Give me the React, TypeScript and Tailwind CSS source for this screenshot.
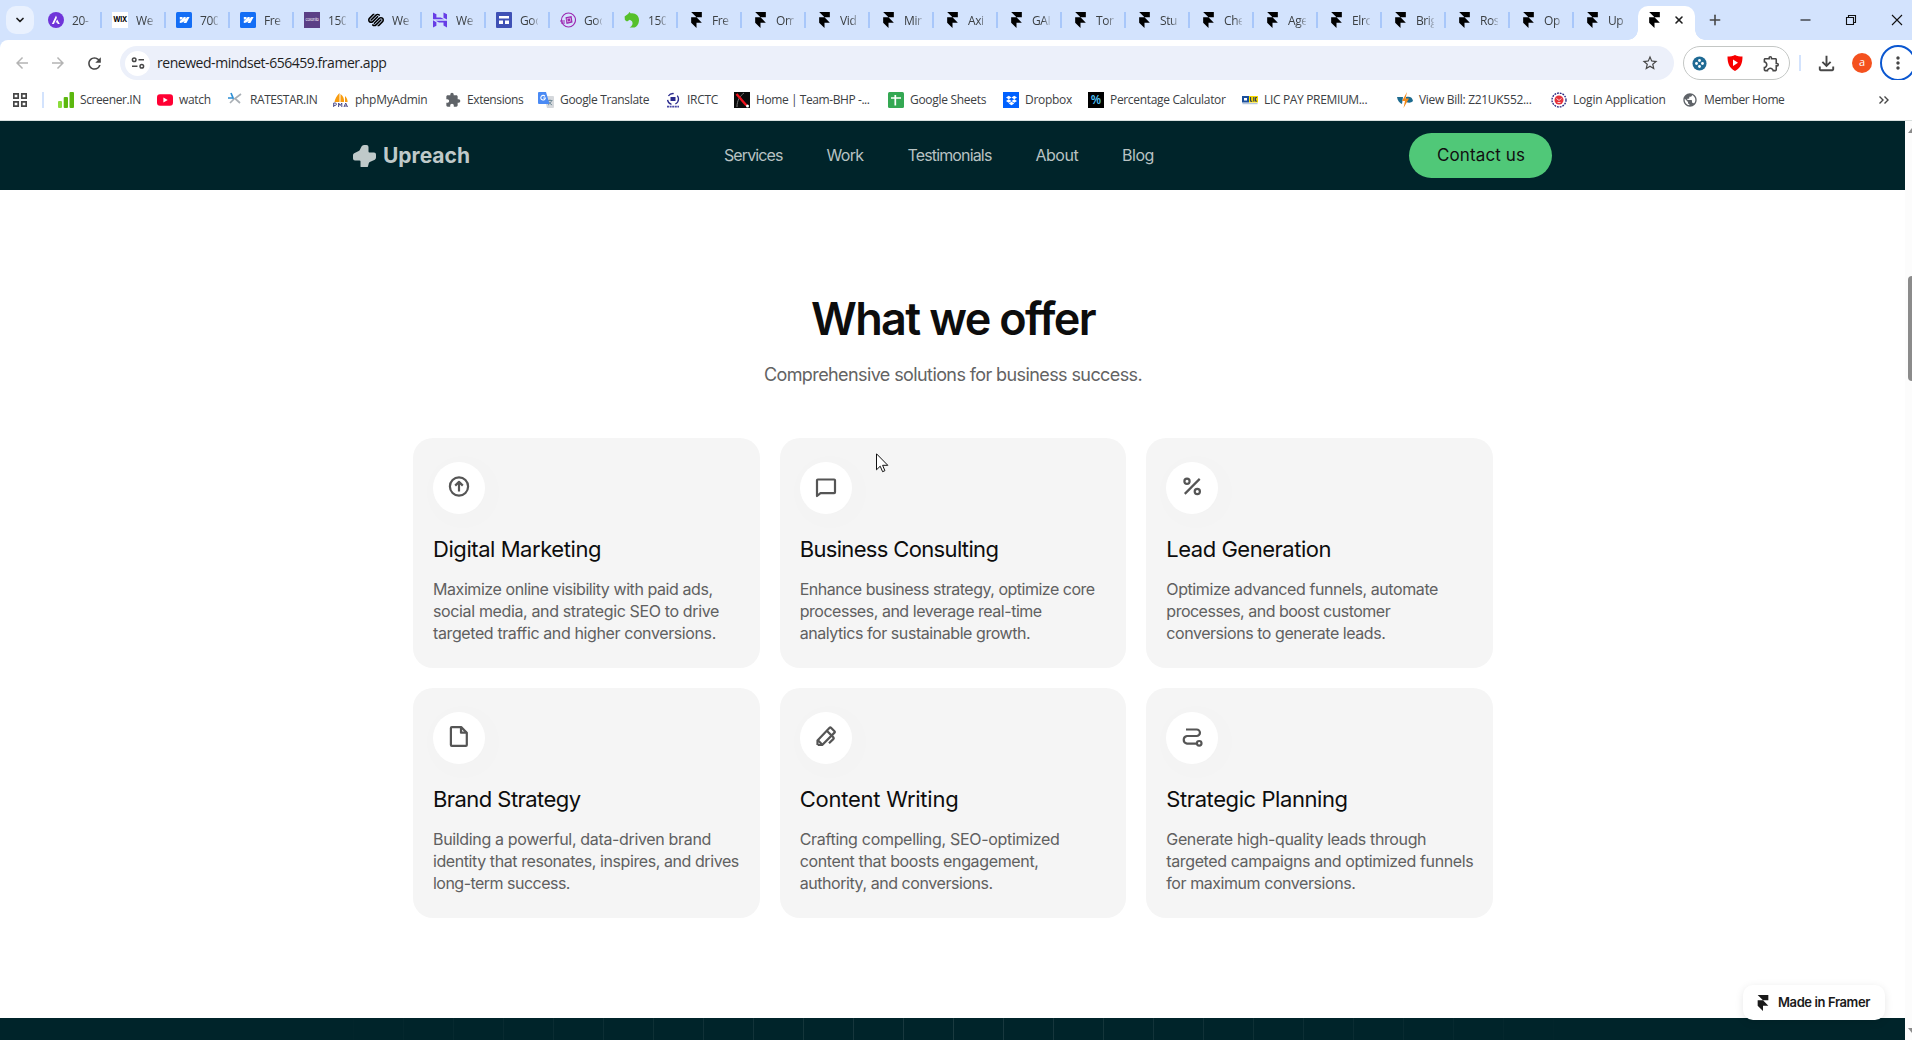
import type { ReactNode } from "react";
import {
  MdArrowBack,
  MdArrowForward,
  MdExtension,
  MdMoreVert,
  MdOutlineExtension,
  MdOutlineFileDownload,
  MdPublic,
  MdRefresh,
  MdStarBorder,
} from "react-icons/md";
import { SiDropbox, SiSquarespace } from "react-icons/si";
import { ChevronDown, Plus, X } from "lucide-react";

/* ---------- Favicons ---------- */

function FramerMark({ className }: { className: string }) {
  return (
    <svg viewBox="0 0 16 24" className={className} fill="currentColor">
      <path d="M0 0h16v8H8zM0 8h8l8 8H0zM0 16h8v8z" />
    </svg>
  );
}

const FramerTabIcon = () => (
  <span className="flex size-4 items-center justify-center">
    <FramerMark className="h-[16px] w-[11px] text-black" />
  </span>
);

const AstraIcon = () => (
  <svg viewBox="0 0 16 16" className="size-4">
    <circle cx="8" cy="8" r="8" fill="#6f35d9" />
    <path d="M8 3.6 3.9 12h2l3-6.2zM9.2 7.4l-1.6 3.1h1.5l.6 1.5h2.1z" fill="#fff" />
  </svg>
);

const WixIcon = () => (
  <span className="flex size-4 items-center justify-center bg-white font-['Inter',sans-serif] text-[7px] font-bold tracking-[-0.3px] text-black">
    WIX
  </span>
);

const WebflowIcon = () => (
  <svg viewBox="0 0 16 16" className="size-4">
    <rect width="16" height="16" rx="1.5" fill="#146ef5" />
    <path
      d="M13.6 5 10.400 11H7.500l1.300-2.500C7.700 10 6.200 10.800 3.800 11V8.600s1.500-.1 2.400-1.100H3.800V5h2.700v2.100L7.700 5h2v2.100L10.900 5z"
      fill="#fff"
    />
  </svg>
);

const ColorlibIcon = () => (
  <span className="flex size-4 items-center justify-center bg-[#5b3f86] font-['Inter',sans-serif] text-[4px] tracking-[-0.1px] text-white">
    colorlib
  </span>
);

const SquarespaceIcon = () => <SiSquarespace className="size-4 text-black" />;

const HostingerIcon = () => (
  <svg viewBox="0 0 16 16" className="size-4" fill="#673de6">
    <path d="M1 7.300V.5l3.400 1.800v3.200h4.400l3.400 1.800zM11.500 5.800V.5L15 2.300v5.300zM11.500 13.600v-3.100H7L3.700 8.700H15v6.800zM1 15.500V8.300l3.400 1.900v3.500z" />
  </svg>
);

const SitesIcon = () => (
  <svg viewBox="0 0 16 16" className="size-4">
    <rect width="16" height="16" rx="1" fill="#3f51b5" />
    <path d="M3 4h10v2.500H3zM3 8.500h4V12H3zM9 8.500h4V12H9z" fill="#fff" />
  </svg>
);

const PinkIcon = () => (
  <svg viewBox="0 0 16 16" className="size-4">
    <circle cx="8.500" cy="8" r="7" fill="none" stroke="#9c27b0" strokeWidth="1.100" />
    <path d="M5.500 5.200 11.600 4l.9 6.600-6 1.300z" fill="#9c27b0" />
    <path d="M7 6.600l3.300-.6.4 3.200-3.200.7z" fill="none" stroke="#e9c6ef" strokeWidth=".7" />
    <path d="M0 9h5M1 11h4" stroke="#9c27b0" strokeWidth="1" />
  </svg>
);

const GreenIcon = () => (
  <svg viewBox="0 0 16 16" className="size-4" fill="#56c02b">
    <path d="M.6 4.600 4.300 1.800 5.400 0l1.500 1.400C11.600.8 15.400 4 15 8.700c-.2 3.600-2.500 6-4.500 6.800H5.600C8.500 13.800 9.300 11.300 8 9.200L5.800 7.800 3 9.400.9 8z" />
  </svg>
);

/* ---------- Bookmark icons ---------- */

const ScreenerIcon = () => (
  <svg viewBox="0 0 16 16" className="size-4" fill="#5cb80f">
    <rect x="0" y="9" width="4" height="7" rx="1" fill="#8bdc3c" />
    <rect x="5.700" y="5" width="4.300" height="11" rx="1" />
    <rect x="11.500" y="0" width="4.500" height="16" rx="1" />
  </svg>
);
const YoutubeIcon = () => (
  <svg viewBox="0 0 16 16" className="size-4">
    <rect y="2.300" width="16" height="11.400" rx="3" fill="#ff0033" />
    <path d="M6.400 5.500 10.700 8l-4.300 2.500z" fill="#fff" />
  </svg>
);
const RatestarIcon = () => (
  <svg viewBox="0 0 16 16" className="size-4" fill="none" strokeWidth="1.700">
    <path d="M3 1l2.500 6M0 6h5" stroke="#2d8fd5" />
    <path d="M13 2 7 6.500l5 4.500M6 7l-4 4" stroke="#a9afb5" />
  </svg>
);
const PmaIcon = () => (
  <svg viewBox="0 0 16 16" className="size-4">
    <path d="M6.500 1C3.500 4 2 7 1.500 10h5zM7.500 2c3 2 3.800 5 3.500 8H7.500zM12 4c2 2 2.600 4 2.600 6H12z" fill="#f89c0e" />
    <path d="M.7 15v-4h1.500a1.200 1.200 0 0 1 0 2.400H.7M5.600 15v-4l1.600 2.500L8.800 11v4M11 15l1.700-4 1.800 4M11.600 14h2.300" fill="none" stroke="#4b4c8a" />
  </svg>
);
const TranslateIcon = () => (
  <svg viewBox="0 0 16 16" className="size-4">
    <path d="M6 4h9a1 1 0 0 1 1 1v10a1 1 0 0 1-1 1H9z" fill="#d5d8dc" />
    <path d="M9.500 8.500h5M12 7.500v1M13.600 8.500c-.5 2-2 3.500-3.500 4.500M10.600 9.500c.7 1.500 2 2.700 3.500 3.500" stroke="#607d8b" strokeWidth=".8" fill="none" />
    <path d="M1 0h7l3.500 12H1a1 1 0 0 1-1-1V1a1 1 0 0 1 1-1z" fill="#4a8af4" />
    <path d="M7 4.400A2.300 2.300 0 1 0 7.400 6H5.200" fill="none" stroke="#fff" strokeWidth="1.100" />
  </svg>
);
const IrctcIcon = () => (
  <svg viewBox="0 0 16 16" className="size-4" fill="none">
    <circle cx="8" cy="7" r="5.500" stroke="#2a2a8c" strokeWidth="1.300" strokeDasharray="6 4" />
    <rect x="5.500" y="5" width="5" height="4" fill="#2a2a8c" />
    <path d="M2 14.700h12" stroke="#4a4aa6" strokeWidth="1.800" strokeDasharray="2 .6" />
  </svg>
);
const BhpIcon = () => (
  <svg viewBox="0 0 16 16" className="size-4">
    <rect width="16" height="16" fill="#0b0b0b" />
    <path d="M3 15C3 8 6 4 10 1" stroke="#777" strokeWidth="1" fill="none" />
    <path d="M2.500 2 12.500 13.500" stroke="#f0141e" strokeWidth="2.400" />
    <circle cx="13.500" cy="14" r="1.500" fill="#fff" />
  </svg>
);
const SheetsIcon = () => (
  <svg viewBox="0 0 16 16" className="size-4">
    <rect width="16" height="16" rx="1.500" fill="#34a853" />
    <path d="M3 6h10M7.300 3v10.500" stroke="#fff" strokeWidth="1.700" />
  </svg>
);
const DropboxIcon = () => (
  <span className="flex size-4 items-center justify-center bg-[#0061ff]">
    <SiDropbox className="size-[11px] text-white" />
  </span>
);
const PercentIcon = () => (
  <span className="flex size-4 items-center justify-center bg-black font-['Open_Sans',sans-serif] text-[12px] font-semibold text-[#4fc3f7]">
    %
  </span>
);
const LicIcon = () => (
  <svg viewBox="0 0 16 16" className="size-4">
    <rect y="4" width="7" height="6.500" fill="#1b4f9c" />
    <rect x="7" y="4" width="9" height="6.500" fill="#f5d800" />
    <path d="M2 6h3v2.500H2z" fill="#fff" />
    <path d="M8.600 5v4.300h1.600M11.800 5v4.500M15 5.600h-1.600v3.500H15" stroke="#1b2f6c" fill="none" />
    <path d="M.5 11.700h15" stroke="#8aa4c8" strokeWidth=".8" />
  </svg>
);
const BillIcon = () => (
  <svg viewBox="0 0 16 16" className="size-4">
    <path d="M0 5h6l-1 7C2.500 11 .5 8.500 0 5zM9 5c4-1 6.500.5 7 4-2 2-4 2-7 1z" fill="#1d6b8f" />
    <path d="M10 0 5 9h3l-1.500 7L12 6.500H8.500z" fill="#f28a1c" />
  </svg>
);
const LoginIcon = () => (
  <svg viewBox="0 0 16 16" className="size-4" fill="none">
    <circle cx="8" cy="8" r="7" stroke="#23237e" strokeWidth="1.300" strokeDasharray="1.800 1" />
    <circle cx="8" cy="8" r="4.500" fill="#e5333c" />
    <path d="M5.500 6.500 8 8.500l2.500-2M6.500 10.500h3" stroke="#fff" strokeWidth=".8" />
  </svg>
);

/* ---------- Browser data ---------- */

const tabs: { title: string; icon: () => ReactNode }[] = [
  { title: "20-", icon: AstraIcon },
  { title: "We", icon: WixIcon },
  { title: "700", icon: WebflowIcon },
  { title: "Fre", icon: WebflowIcon },
  { title: "150", icon: ColorlibIcon },
  { title: "We", icon: SquarespaceIcon },
  { title: "We", icon: HostingerIcon },
  { title: "Goo", icon: SitesIcon },
  { title: "Goo", icon: PinkIcon },
  { title: "150", icon: GreenIcon },
  { title: "Fre", icon: FramerTabIcon },
  { title: "Om", icon: FramerTabIcon },
  { title: "Vid", icon: FramerTabIcon },
  { title: "Min", icon: FramerTabIcon },
  { title: "Axi", icon: FramerTabIcon },
  { title: "GAI", icon: FramerTabIcon },
  { title: "Ton", icon: FramerTabIcon },
  { title: "Stu", icon: FramerTabIcon },
  { title: "Che", icon: FramerTabIcon },
  { title: "Age", icon: FramerTabIcon },
  { title: "Elro", icon: FramerTabIcon },
  { title: "Brig", icon: FramerTabIcon },
  { title: "Ros", icon: FramerTabIcon },
  { title: "Op", icon: FramerTabIcon },
  { title: "Up", icon: FramerTabIcon },
];

const bookmarks: { label: string; icon: () => ReactNode; width: string; tracking: string }[] = [
  { label: "Screener.IN", icon: ScreenerIcon, width: "w-[99px]", tracking: "tracking-[-0.4px]" },
  { label: "watch", icon: YoutubeIcon, width: "w-[71px]", tracking: "tracking-[-0.3px]" },
  { label: "RATESTAR.IN", icon: RatestarIcon, width: "w-[105px]", tracking: "tracking-[-0.42px]" },
  { label: "phpMyAdmin", icon: PmaIcon, width: "w-[112px]", tracking: "tracking-[-0.3px]" },
  { label: "Extensions", icon: () => <MdExtension className="size-4 text-[#5f6368]" />, width: "w-[93px]", tracking: "tracking-[-0.4px]" },
  { label: "Google Translate", icon: TranslateIcon, width: "w-[127px]", tracking: "tracking-[-0.34px]" },
  { label: "IRCTC", icon: IrctcIcon, width: "w-[69px]", tracking: "tracking-[-0.3px]" },
  { label: "Home | Team-BHP -...", icon: BhpIcon, width: "w-[154px]", tracking: "tracking-[-0.42px]" },
  { label: "Google Sheets", icon: SheetsIcon, width: "w-[115px]", tracking: "tracking-[-0.3px]" },
  { label: "Dropbox", icon: DropboxIcon, width: "w-[85px]", tracking: "tracking-[-0.3px]" },
  { label: "Percentage Calculator", icon: PercentIcon, width: "w-[154px]", tracking: "tracking-[-0.33px]" },
  { label: "LIC PAY PREMIUM...", icon: LicIcon, width: "w-[155px]", tracking: "tracking-[-0.34px]" },
  { label: "View Bill: Z21UK552...", icon: BillIcon, width: "w-[154px]", tracking: "tracking-[-0.3px]" },
  { label: "Login Application", icon: LoginIcon, width: "w-[131px]", tracking: "tracking-[-0.2px]" },
  { label: "Member Home", icon: () => <MdPublic className="size-4 text-[#5f6368]" />, width: "w-[120px]", tracking: "tracking-[-0.38px]" },
];

function TabStrip() {
  return (
    <div className="flex h-10 items-start bg-[#d3e3fd]">
      <div className="mt-1.5 ml-1.5 flex h-7 w-7 items-center justify-center rounded-[10px] bg-[#e9f1fe]">
        <ChevronDown className="size-3 text-[#1f1f1f]" strokeWidth={3.5} />
      </div>
      <div className="ml-1 flex h-10 items-center">
        {tabs.map(({ title, icon: Icon }, i) => (
          <div key={i} className="flex w-16 shrink-0 items-center pl-2.5">
            <Icon />
            <span className="ml-2 w-[18px] overflow-hidden whitespace-nowrap pt-px text-[12px] leading-4 tracking-[-0.4px] text-[#3c4043] [mask-image:linear-gradient(to_right,black_60%,rgba(0,0,0,0.2))]">
              {title}
            </span>
            <span className={i < tabs.length - 1 ? "ml-2.5 h-4 w-[2px] bg-[#a8c7fa]" : "hidden"} />
          </div>
        ))}
      </div>
      <div className="flex h-10 items-end pt-1.5">
        <div className="relative flex h-[34px] w-[57px] items-center rounded-t-[10px] bg-white pb-1.5 pl-2">
          <span className="absolute bottom-0 -left-2.5 size-2.5 bg-[radial-gradient(circle_at_0_0,transparent_9.5px,white_10px)]" />
          <span className="absolute -right-2.5 bottom-0 size-2.5 bg-[radial-gradient(circle_at_100%_0,transparent_9.5px,white_10px)]" />
          <FramerTabIcon />
          <X className="ml-[11px] size-3 text-[#1f1f1f]" strokeWidth={3.2} />
        </div>
      </div>
      <div className="flex h-10 flex-1 items-center">
        <Plus className="ml-[12px] size-4 text-[#474747]" strokeWidth={2.4} />
        <svg viewBox="0 0 110 20" className="mr-1 ml-auto h-5 w-[110px]" fill="none" stroke="#111" strokeWidth="1.100">
          <path d="M2.500 10h10" />
          <path d="M48.500 7.500h7v7h-7zM50.500 7.500v-2h7v7h-2" />
          <path d="M94 5l10 10M104 5 94 15" />
        </svg>
      </div>
    </div>
  );
}

function Toolbar() {
  return (
    <div className="bg-[#d3e3fd]">
      <div className="flex h-10 items-end overflow-hidden rounded-tl-[8px] bg-white">
        <div className="flex h-[34px] flex-1 items-center">
          <MdArrowBack className="ml-[13px] size-[18px] shrink-0 text-[#b4b4b4]" />
          <MdArrowForward className="ml-[18px] size-[18px] shrink-0 text-[#b4b4b4]" />
          <MdRefresh className="ml-[18px] size-[19px] shrink-0 text-[#474747]" />
          <div className="ml-4 flex h-[34px] w-[1554px] shrink-0 items-center rounded-full bg-[#ecf0fa] pl-[5px]">
            <span className="flex size-[25px] items-center justify-center rounded-full bg-white">
              <svg viewBox="0 0 14 14" className="size-[14px]" fill="none" stroke="#474747" strokeWidth="1.500">
                <circle cx="3.200" cy="3.700" r="1.800" />
                <path d="M7.500 3.700H13M1 10.300h5.500" />
                <circle cx="10.800" cy="10.300" r="1.800" />
              </svg>
            </span>
            <span className="ml-[7px] flex-1 pb-px text-[14px] tracking-[-0.46px] text-[#1f1f1f]">
              renewed-mindset-656459.framer.app
            </span>
            <MdStarBorder className="mr-[15px] size-[18px] text-[#474747]" />
          </div>
          <div className="ml-[9px] flex h-[34px] w-[107px] shrink-0 items-center justify-between rounded-full border border-[#c4c7c5] px-2">
            <svg viewBox="0 0 16 16" className="size-[15px]">
              <circle cx="8" cy="8" r="7.500" fill="#1f6a94" />
              <g fill="#fff">
                <circle cx="8" cy="4.800" r="1.500" />
                <circle cx="8" cy="11.200" r="1.500" />
                <circle cx="4.800" cy="8" r="1.500" />
                <circle cx="11.200" cy="8" r="1.500" />
              </g>
            </svg>
            <svg viewBox="0 0 16 16" className="size-4">
              <path d="M8 0c2 1.200 4.800 1.500 7.500 1.500 0 6-1.500 11.500-7.500 14.500C2 13 .5 7.500.5 1.500 3.200 1.500 6 1.200 8 0z" fill="#f80000" />
              <path d="M6 4.500 11 7.700l-5 3.200z" fill="#fff" />
            </svg>
            <MdOutlineExtension className="size-[19px] text-[#474747]" />
          </div>
          <span className="ml-[9px] h-4 w-[2px] shrink-0 bg-[#d3e3fd]" />
          <MdOutlineFileDownload className="ml-[14px] size-[23px] shrink-0 text-[#474747]" />
          <span className="ml-[14px] flex size-5 shrink-0 items-center justify-center rounded-full bg-[#f4511e] pb-px text-[11px] text-white">
            a
          </span>
          <span className="ml-2 flex size-9 shrink-0 items-center justify-center rounded-full border-2 border-[#0b57d0]">
            <MdMoreVert className="size-5 text-[#474747]" />
          </span>
        </div>
      </div>
    </div>
  );
}

function BookmarksBar() {
  return (
    <div className="flex h-[41px] items-center border-b border-[#d9e0df] bg-white">
      <svg viewBox="0 0 14 14" className="ml-[13px] size-[14px] shrink-0" fill="none" stroke="#474747" strokeWidth="1.700">
        <path d="M.8.8h4.400v4.400H.8zM8.800.8h4.400v4.400H8.800zM.8 8.800h4.400v4.400H.8zM8.800 8.800h4.400v4.400H8.800z" />
      </svg>
      <span className="ml-[15px] h-4 w-[2px] bg-[#d3e3fd]" />
      <div className="ml-[14px] flex">
        {bookmarks.map(({ label, icon: Icon, width, tracking }) => (
          <div key={label} className={`flex shrink-0 items-center gap-1.5 ${width}`}>
            <span className="shrink-0">
              <Icon />
            </span>
            <span className={`text-[12px] leading-4 whitespace-nowrap text-[#3c4043] ${tracking}`}>{label}</span>
          </div>
        ))}
      </div>
      <svg viewBox="0 0 12 12" className="mr-[22px] ml-auto size-3" fill="none" stroke="#474747" strokeWidth="1.400">
        <path d="M1.500 2.500 5 6 1.500 9.500M6.500 2.500 10 6 6.500 9.500" />
      </svg>
    </div>
  );
}

/* ---------- Page ---------- */

function SiteHeader() {
  return (
    <header className="flex h-[69px] shrink-0 items-center bg-[#00242a] pl-[353px]">
      <div className="flex w-[371px] items-center gap-[7px] text-[#bfc9c9]">
        <svg viewBox="0 0 23 22" className="h-[22px] w-[23px]" fill="currentColor">
          <path d="M8.500 1.500Q9.200 0 11 0h2.500q2 0 2 2v4.500q0 1 1 1H21q2 0 2 2v3q0 1.500-1.200 2.200l-5 2.200q-.8.400-1 1.300l-.8 3q-.6 1.800-2.300 1.800H9.500q-2 0-2-2v-4.500q0-1-1-1H2q-2 0-2-2V10.300q0-1.400 1.200-2l4.500-2.200q.9-.5 1.200-1.300z" />
        </svg>
        <span className="pt-px text-[21px] font-bold">Upreach</span>
      </div>
      <nav className="flex gap-[44px] pb-px text-[16px] text-[#b8c2c3]">
        <a className="tracking-[-0.9px]">Services</a>
        <a className="tracking-[-0.65px]">Work</a>
        <a className="tracking-[-0.85px]">Testimonials</a>
        <a className="tracking-[-0.5px]">About</a>
        <a className="tracking-[-0.5px]">Blog</a>
      </nav>
      <button className="mr-[353px] ml-auto flex h-[45px] w-[143px] items-center justify-center rounded-full bg-[#50c878] pt-px pl-px text-[17px] tracking-[0.1px] text-[#101010]">
        Contact us
      </button>
    </header>
  );
}

const services: {
  title: string;
  titleTracking: string;
  icon: ReactNode;
  lines: [string, string][];
}[] = [
  {
    title: "Digital Marketing",
    titleTracking: "tracking-[-0.44px]",
    icon: (
      <>
        <circle cx="12" cy="10.500" r="9.100" />
        <path d="M12 15.500V6M8.200 9.600 12 5.900l3.800 3.700" />
      </>
    ),
    lines: [
      ["Maximize online visibility with paid ads,", "tracking-[-0.43px]"],
      ["social media, and strategic SEO to drive", "tracking-[-0.36px]"],
      ["targeted traffic and higher conversions.", "tracking-[-0.39px]"],
    ],
  },
  {
    title: "Business Consulting",
    titleTracking: "tracking-[-0.66px]",
    icon: <path d="M3 20V4.300q0-.8.800-.8h16.400q.8 0 .8.800v12q0 .8-.8.800H6.500z" />,
    lines: [
      ["Enhance business strategy, optimize core", "tracking-[-0.49px]"],
      ["processes, and leverage real-time", "tracking-[-0.47px]"],
      ["analytics for sustainable growth.", "tracking-[-0.44px]"],
    ],
  },
  {
    title: "Lead Generation",
    titleTracking: "tracking-[-0.48px]",
    icon: (
      <>
        <circle cx="7" cy="5.300" r="2.600" />
        <circle cx="17.300" cy="15.500" r="2.600" />
        <path d="M19.700 2.900 4.800 17.900" />
      </>
    ),
    lines: [
      ["Optimize advanced funnels, automate", "tracking-[-0.41px]"],
      ["processes, and boost customer", "tracking-[-0.5px]"],
      ["conversions to generate leads.", "tracking-[-0.45px]"],
    ],
  },
  {
    title: "Brand Strategy",
    titleTracking: "tracking-[-0.56px]",
    icon: (
      <>
        <path d="M4.800 1.100h9.400L19.800 6.700V19q0 .9-.9.900H4.800q-.9 0-.9-.9V2q0-.9.900-.9z" />
        <path d="M14 1.200v5.500h5.600" />
      </>
    ),
    lines: [
      ["Building a powerful, data-driven brand", "tracking-[-0.34px]"],
      ["identity that resonates, inspires, and drives", "tracking-[-0.42px]"],
      ["long-term success.", "tracking-[-0.52px]"],
    ],
  },
  {
    title: "Content Writing",
    titleTracking: "tracking-[-0.24px]",
    icon: (
      <>
        <path d="M3.500 18.900v-4.500L15.600 1.700q.7-.7 1.400 0l3.500 3.500q.7.700 0 1.400L8.200 19H3.700" />
        <path d="M12.800 4.700 17.700 9.600M3.900 14.300l4.200 4.300M17.700 9.600l1.800 1.900q.6.700 0 1.400L15 17.300" />
      </>
    ),
    lines: [
      ["Crafting compelling, SEO-optimized", "tracking-[-0.31px]"],
      ["content that boosts engagement,", "tracking-[-0.36px]"],
      ["authority, and conversions.", "tracking-[-0.44px]"],
    ],
  },
  {
    title: "Strategic Planning",
    titleTracking: "tracking-[-0.42px]",
    icon: (
      <>
        <path d="M6 3.500h10.700a3.200 3.200 0 0 1 0 6.500H7a3.900 3.900 0 0 0 0 7.700h9.500" />
        <circle cx="19.200" cy="17.300" r="2.300" />
      </>
    ),
    lines: [
      ["Generate high-quality leads through", "tracking-[-0.37px]"],
      ["targeted campaigns and optimized funnels", "tracking-[-0.39px]"],
      ["for maximum conversions.", "tracking-[-0.44px]"],
    ],
  },
];

function Offer() {
  return (
    <section className="flex h-[828px] shrink-0 flex-col items-center pt-[102px] pl-px">
      <h2 className="text-[45px] leading-[54px] font-semibold tracking-[-1.65px] text-[#0d0d0d]">What we offer</h2>
      <p className="mt-4 text-[18px] leading-[26px] tracking-[-0.6px] text-[#636363]">
        Comprehensive solutions for business success.
      </p>
      <div className="mt-[50px] grid w-[1080px] grid-cols-3 gap-5">
        {services.map((s) => (
          <article key={s.title} className="h-[230px] rounded-[20px] bg-[#f5f5f5] px-5 pt-6">
            <div className="flex size-[52px] items-center justify-center rounded-full bg-white shadow-[4px_4px_40px_rgba(0,0,0,0.02)]">
              <svg
                viewBox="0 0 24 24"
                className="size-6"
                fill="none"
                stroke="#555"
                strokeWidth="2.2"
                strokeLinejoin="round"
                strokeLinecap="butt"
              >
                {s.icon}
              </svg>
            </div>
            <h3 className={`mt-5 text-[22px] leading-[31px] whitespace-nowrap text-[#0d0d0d] ${s.titleTracking}`}>
              {s.title}
            </h3>
            <p className="mt-[12.600px] text-[16px] leading-[22.400px] whitespace-nowrap text-[#606060]">
              {s.lines.map(([text, tracking]) => (
                <span key={text} className={`block ${tracking}`}>
                  {text}
                </span>
              ))}
            </p>
          </article>
        ))}
      </div>
    </section>
  );
}

function Scrollbar() {
  return (
    <div className="flex w-[7px] shrink-0 flex-col overflow-hidden bg-[#fcfcfc] pl-[3px]">
      <svg viewBox="0 0 8 5" className="mt-[7px] h-[5px] w-2 shrink-0" fill="#8b8b8b">
        <path d="M0 5 4 0l4 5z" />
      </svg>
      <div className="mt-[143px] h-[105px] w-2 shrink-0 rounded-full bg-[#8b8b8b]" />
      <svg viewBox="0 0 8 5" className="mt-auto mb-[7px] h-[5px] w-2 shrink-0" fill="#8b8b8b">
        <path d="M0 0h8L4 5z" />
      </svg>
    </div>
  );
}

export default function App() {
  return (
    <div className="relative flex h-[1040px] w-[1912px] flex-col overflow-hidden bg-white font-['Open_Sans',sans-serif]">
      <TabStrip />
      <Toolbar />
      <BookmarksBar />
      <div className="flex flex-1">
        <main className="flex w-[1905px] flex-col font-['Inter',sans-serif]">
          <SiteHeader />
          <Offer />
          <div className="flex-1 bg-[#00242a]">
            <div className="mx-auto h-full w-[1300px] bg-[repeating-linear-gradient(to_right,rgba(255,255,255,0.1)_0_1px,transparent_1px_50px)] [mask-image:linear-gradient(to_right,transparent,black_50%,transparent)]" />
          </div>
        </main>
        <Scrollbar />
      </div>

      <div className="absolute top-[985px] left-[1743px] flex h-[35px] w-[142px] items-center rounded-[10px] bg-white pl-[14px] font-['Inter',sans-serif] shadow-[0_2px_8px_rgba(0,0,0,0.1)]">
        <FramerMark className="h-4 w-3 text-[#1a1a1a]" />
        <span className="ml-[9px] pt-px text-[13px] font-semibold tracking-[-0.4px] whitespace-nowrap text-[#1a1a1a]">
          Made in Framer
        </span>
      </div>

      <svg viewBox="0 0 13 20" className="absolute top-[453px] left-[876px] h-5 w-[13px]" fill="#fff" stroke="#111" strokeWidth="1">
        <path d="M.5.800v16l3.700-3.600 2.400 5.500 2.300-1L6.600 12.300h5.200z" />
      </svg>
    </div>
  );
}
